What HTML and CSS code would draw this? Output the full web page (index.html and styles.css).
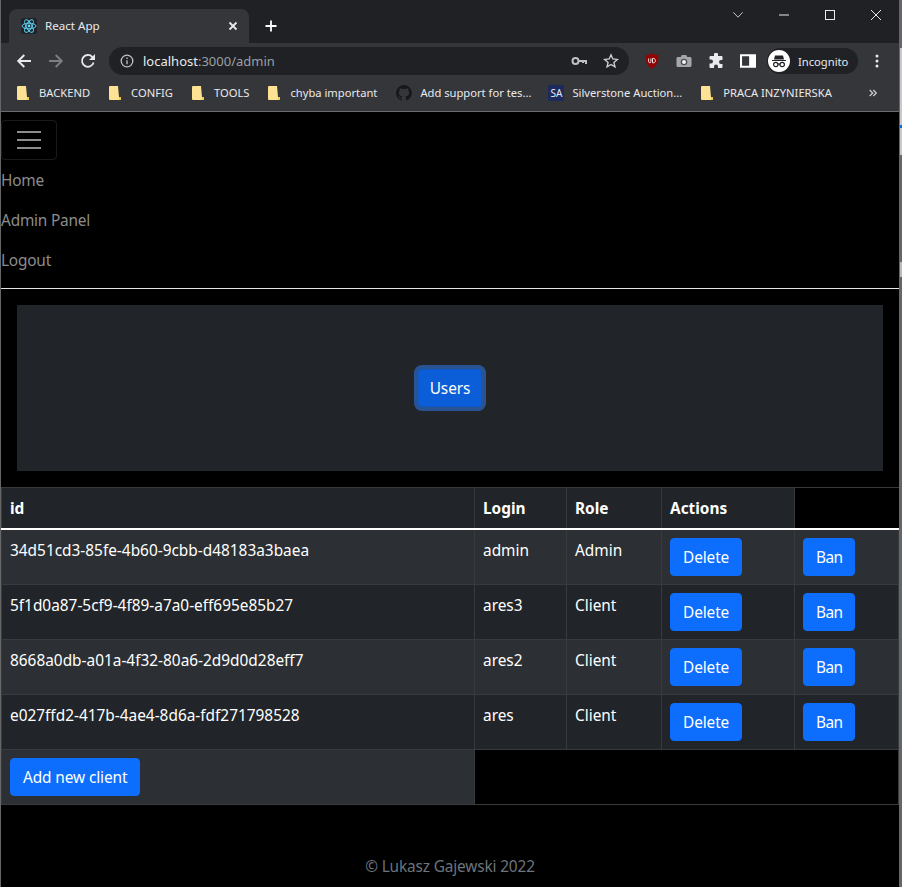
FILE: index.html
```html
<!DOCTYPE html>
<html lang="en">
<head>
    <meta charset="UTF-8">
    <title>React App</title>
    <link rel="stylesheet" href="styles.css">
</head>
<body>
<div class="window">
    <!-- browser chrome -->
    <div class="tabstrip">
        <div class="tab">
            <svg class="favicon" viewBox="0 0 16 16">
                <rect width="16" height="16" rx="2" fill="#20232a"/>
                <g fill="none" stroke="#61dafb" stroke-width=".9">
                    <ellipse cx="8" cy="8" rx="7" ry="2.8"/>
                    <ellipse cx="8" cy="8" rx="7" ry="2.8" transform="rotate(60 8 8)"/>
                    <ellipse cx="8" cy="8" rx="7" ry="2.8" transform="rotate(120 8 8)"/>
                </g>
                <circle cx="8" cy="8" r="1.4" fill="#61dafb"/>
            </svg>
            <span class="tab-title">React App</span>
            <svg class="tab-close" viewBox="0 0 10 10"><path d="M1.5 1.5l7 7M8.5 1.5l-7 7" stroke="#e8eaed" stroke-width="1.8"/></svg>
        </div>
        <svg class="new-tab" viewBox="0 0 12 12"><path d="M6 .5v11M.5 6h11" stroke="#fff" stroke-width="1.8"/></svg>
        <div class="win-controls">
            <svg class="win-chevron" viewBox="0 0 10 6"><path d="M.3.3L5 5.2 9.7.3" fill="none" stroke="#c4c7c5" stroke-width="1"/></svg>
            <svg class="win-btn" viewBox="0 0 10 10"><path d="M0 5h10" stroke="#e8eaed" stroke-width="1"/></svg>
            <svg class="win-btn" viewBox="0 0 10 10"><rect x=".5" y=".5" width="9" height="9" fill="none" stroke="#e8eaed" stroke-width="1"/></svg>
            <svg class="win-btn" viewBox="0 0 10 10"><path d="M0 0l10 10M10 0L0 10" stroke="#e8eaed" stroke-width="1"/></svg>
        </div>
    </div>

    <div class="toolbar">
        <div class="nav-icons">
            <svg class="tool-icon" viewBox="0 0 16 16"><path d="M15 8H2.5M8.3 2L2.2 8l6.1 6" fill="none" stroke="#e8eaed" stroke-width="1.9"/></svg>
            <svg class="tool-icon" viewBox="0 0 16 16"><path d="M1 8h12.500M7.700 2l6.100 6-6.100 6" fill="none" stroke="#7c7e81" stroke-width="1.9"/></svg>
            <svg class="tool-icon" viewBox="0 0 16 16"><path d="M13.600 9.500A5.900 5.900 0 1 1 12.200 3.800L14.500 6" fill="none" stroke="#e8eaed" stroke-width="1.800"/><path d="M15 1v6H9z" fill="#e8eaed"/></svg>
        </div>
        <div class="omnibox">
            <svg class="info-icon" viewBox="0 0 14 14"><circle cx="7" cy="7" r="5.800" fill="none" stroke="#bdc1c6" stroke-width="1.300"/><path d="M7 6.200v4M7 3.600v1.500" stroke="#bdc1c6" stroke-width="1.300"/></svg>
            <span class="url"><span class="url-host">localhost</span>:3000/admin</span>
            <svg class="omni-icon" viewBox="0 0 16 16"><circle cx="4.500" cy="8" r="3" fill="none" stroke="#bdc1c6" stroke-width="2"/><path d="M7.500 8H15v3M12 8v2" fill="none" stroke="#bdc1c6" stroke-width="2"/></svg>
            <svg class="omni-icon" viewBox="0 0 16 16"><path d="M8 1.800l1.800 4.200 4.600.4-3.500 3 1.100 4.500L8 11.500l-4 2.400 1.100-4.500-3.500-3 4.600-.4z" fill="none" stroke="#d0d3d6" stroke-width="1.300"/></svg>
        </div>
        <div class="ext-icons">
            <svg class="tool-icon" viewBox="0 0 16 16"><path d="M8 .5l6.500 2c0 6-1 10.500-6.500 13C2.500 13 1.500 8.500 1.500 2.500z" fill="#8f0505"/><path d="M4.600 5.500v3.200c0 1.300 2.300 1.300 2.300 0V5.500M8.500 5.500v4.300h1.200c2.300 0 2.300-4.300 0-4.300z" fill="none" stroke="#f0e0e0" stroke-width="1"/></svg>
            <svg class="tool-icon" viewBox="0 0 16 16"><path d="M.5 5.500c0-.8.600-1.500 1.500-1.500h2.800l1-2h4.400l1 2H14c.9 0 1.500.700 1.500 1.500v7c0 .8-.6 1.500-1.500 1.500H2c-.9 0-1.500-.7-1.500-1.500z" fill="#a3a7ab"/><circle cx="8" cy="9" r="3.300" fill="#4a4c50"/><circle cx="8" cy="9" r="2" fill="#f1f3f4"/></svg>
            <svg class="tool-icon" viewBox="0 0 16 16"><path d="M6 1.500a2 2 0 0 1 4 0V3h3.500a1 1 0 0 1 1 1v3H13a2 2 0 0 0 0 4h1.500v3a1 1 0 0 1-1 1H10v-1.500a2 2 0 0 0-4 0V15H2.500a1 1 0 0 1-1-1v-3.500H3a2 2 0 0 0 0-4H1.500V4a1 1 0 0 1 1-1H6z" fill="#e8eaed"/></svg>
            <svg class="tool-icon" viewBox="0 0 14 14"><path d="M0 1h14v12H0zM1.800 2.800v8.400h6.400V2.800z" fill="#fff" fill-rule="evenodd"/><rect x="8.200" y="2" width="4.500" height="10" fill="#fff"/></svg>
        </div>
        <div class="profile">
            <svg class="avatar" viewBox="0 0 22 22">
                <circle cx="11" cy="11" r="11" fill="#fff"/>
                <path d="M4 10h14v1H4zM7 5.500h8l1 4H6z" fill="#202124"/>
                <g fill="none" stroke="#202124" stroke-width="1.200"><circle cx="7.800" cy="14.500" r="2.200"/><circle cx="14.200" cy="14.500" r="2.200"/><path d="M10 14.200h2"/></g>
            </svg>
            <span class="profile-name">Incognito</span>
        </div>
        <svg class="menu-dots" viewBox="0 0 4 14"><circle cx="2" cy="2" r="1.500" fill="#e8eaed"/><circle cx="2" cy="7" r="1.500" fill="#e8eaed"/><circle cx="2" cy="12" r="1.500" fill="#e8eaed"/></svg>
    </div>

    <div class="bookmarks">
        <div class="bookmark"><svg class="folder" viewBox="0 0 12 14"><path d="M0 1a1 1 0 0 1 1-1h8l1 11h2v2a1 1 0 0 1-1 1H1a1 1 0 0 1-1-1z" fill="#fde293"/><path d="M10 11h2v3h-2z" fill="#f2c94c"/></svg><span>BACKEND</span></div>
        <div class="bookmark"><svg class="folder" viewBox="0 0 12 14"><path d="M0 1a1 1 0 0 1 1-1h8l1 11h2v2a1 1 0 0 1-1 1H1a1 1 0 0 1-1-1z" fill="#fde293"/><path d="M10 11h2v3h-2z" fill="#f2c94c"/></svg><span>CONFIG</span></div>
        <div class="bookmark"><svg class="folder" viewBox="0 0 12 14"><path d="M0 1a1 1 0 0 1 1-1h8l1 11h2v2a1 1 0 0 1-1 1H1a1 1 0 0 1-1-1z" fill="#fde293"/><path d="M10 11h2v3h-2z" fill="#f2c94c"/></svg><span>TOOLS</span></div>
        <div class="bookmark"><svg class="folder" viewBox="0 0 12 14"><path d="M0 1a1 1 0 0 1 1-1h8l1 11h2v2a1 1 0 0 1-1 1H1a1 1 0 0 1-1-1z" fill="#fde293"/><path d="M10 11h2v3h-2z" fill="#f2c94c"/></svg><span>chyba important</span></div>
        <div class="bookmark"><svg class="site-icon" viewBox="0 0 16 16"><path d="M8 0a8 8 0 0 0-2.500 15.600c.4.100.5-.2.500-.4v-1.400c-2.200.5-2.700-1-2.700-1-.4-.9-.9-1.200-.9-1.200-.7-.5.100-.5.100-.5.800.100 1.200.8 1.200.8.700 1.200 1.900.9 2.300.7.100-.5.300-.9.500-1.100-1.800-.2-3.600-.9-3.600-4 0-.9.300-1.600.8-2.100-.1-.2-.4-1 .1-2.100 0 0 .7-.2 2.200.8a7.600 7.600 0 0 1 4 0c1.500-1 2.200-.8 2.200-.8.400 1.100.2 1.900.1 2.100.5.600.8 1.300.8 2.100 0 3.100-1.900 3.700-3.700 3.900.3.300.6.700.6 1.500v2.200c0 .2.100.5.600.4A8 8 0 0 0 8 0z" fill="#16181b"/></svg><span>Add support for tes...</span></div>
        <div class="bookmark"><span class="sa-icon">SA</span><span>Silverstone Auction...</span></div>
        <div class="bookmark"><svg class="folder" viewBox="0 0 12 14"><path d="M0 1a1 1 0 0 1 1-1h8l1 11h2v2a1 1 0 0 1-1 1H1a1 1 0 0 1-1-1z" fill="#fde293"/><path d="M10 11h2v3h-2z" fill="#f2c94c"/></svg><span>PRACA INZYNIERSKA</span></div>
        <svg class="more-marks" viewBox="0 0 8 8"><path d="M.7 1l3 3-3 3M4.300 1l3 3-3 3" fill="none" stroke="#c8cacd" stroke-width="1.300"/></svg>
    </div>

    <!-- page -->
    <div class="page">
        <nav class="navbar">
            <button class="navbar-toggler" type="button"><span class="toggler-icon"></span></button>
            <a class="nav-link" href="#">Home</a>
            <a class="nav-link" href="#">Admin Panel</a>
            <a class="nav-link" href="#">Logout</a>
        </nav>
        <hr class="nav-rule">

        <div class="panel-wrap">
            <div class="panel">
                <button class="btn btn-focus" type="button">Users</button>
            </div>
        </div>

        <table class="users-table">
            <thead>
                <tr>
                    <th class="col-id">id</th>
                    <th class="col-login">Login</th>
                    <th class="col-role">Role</th>
                    <th class="col-actions">Actions</th>
                    <th class="col-empty"></th>
                </tr>
            </thead>
            <tbody>
                <tr class="odd">
                    <td>34d51cd3-85fe-4b60-9cbb-d48183a3baea</td><td>admin</td><td>Admin</td>
                    <td><button class="btn" type="button">Delete</button></td>
                    <td><button class="btn btn-ban" type="button">Ban</button></td>
                </tr>
                <tr>
                    <td>5f1d0a87-5cf9-4f89-a7a0-eff695e85b27</td><td>ares3</td><td>Client</td>
                    <td><button class="btn" type="button">Delete</button></td>
                    <td><button class="btn btn-ban" type="button">Ban</button></td>
                </tr>
                <tr class="odd">
                    <td>8668a0db-a01a-4f32-80a6-2d9d0d28eff7</td><td>ares2</td><td>Client</td>
                    <td><button class="btn" type="button">Delete</button></td>
                    <td><button class="btn btn-ban" type="button">Ban</button></td>
                </tr>
                <tr>
                    <td>e027ffd2-417b-4ae4-8d6a-fdf271798528</td><td>ares</td><td>Client</td>
                    <td><button class="btn" type="button">Delete</button></td>
                    <td><button class="btn btn-ban" type="button">Ban</button></td>
                </tr>
                <tr class="add-row">
                    <td class="odd-cell"><button class="btn" type="button">Add new client</button></td>
                    <td class="blank" colspan="4"></td>
                </tr>
            </tbody>
        </table>

        <footer class="footer">© Lukasz Gajewski 2022</footer>
    </div>
</div>
<div class="desktop-edge"></div>
</body>
</html>
```

FILE: styles.css
```css
* {
    box-sizing: border-box;
}
html, body {
    margin: 0;
    height: 100%;
}
body {
    background: #666;
    font-family: "Noto Sans", sans-serif;
    overflow: hidden;
    display: flex;
}
.window {
    width: 898px;
    height: 887px;
    margin: 0 1px;
    flex: none;
    display: flex;
    flex-direction: column;
}
.desktop-edge {
    width: 2px;
    flex: none;
    background: linear-gradient(#666 48px, #c9c9c9 48px, #c9c9c9 125px, #0a6cd0 125px, #0a6cd0 128px, #c9c9c9 128px, #c9c9c9 155px, #666 155px, #666 262px, #bbb 262px, #bbb 277px, #666 277px);
}

/* browser chrome */
.tabstrip {
    height: 43px;
    flex: none;
    background: #202124;
    display: flex;
    align-items: flex-end;
    padding-left: 8px;
}
.tab {
    width: 240px;
    height: 34px;
    background: #35363a;
    border-radius: 8px 8px 0 0;
    display: flex;
    align-items: center;
    padding: 0 11px 0 12px;
    color: #e8eaed;
    font-size: 11.6px;
}
.favicon {
    width: 16px;
    height: 16px;
    margin-right: 8px;
}
.tab-title {
    flex: 1;
    padding-bottom: 2px;
}
.tab-close {
    width: 10px;
    height: 10px;
}
.new-tab {
    width: 12px;
    height: 12px;
    margin: 0 0 11px 16px;
}
.win-controls {
    margin-left: auto;
    align-self: flex-start;
    display: flex;
    align-items: center;
    height: 10px;
    margin-top: 10px;
    padding-right: 18px;
}
.win-chevron {
    width: 10px;
    height: 6px;
}
.win-btn {
    width: 10px;
    height: 10px;
    margin-left: 36px;
}
.toolbar {
    height: 37px;
    flex: none;
    background: #35363a;
    display: flex;
    align-items: center;
    padding: 0 0 1px 15px;
}
.nav-icons, .ext-icons {
    display: flex;
    gap: 16px;
}
.tool-icon {
    width: 16px;
    height: 16px;
    display: block;
}
.omnibox {
    width: 520px;
    height: 28px;
    margin-left: 13px;
    background: #202124;
    border-radius: 14px;
    display: flex;
    align-items: center;
    padding: 0 10px 0 11px;
    font-size: 13px;
    color: #9aa0a6;
}
.info-icon {
    width: 14px;
    height: 14px;
    margin-right: 9px;
}
.url {
    flex: 1;
}
.url-host {
    color: #e8eaed;
}
.omni-icon {
    width: 16px;
    height: 16px;
    margin-left: 16px;
}
.ext-icons {
    margin-left: 15px;
}
.profile {
    width: 91px;
    height: 26px;
    margin-left: 11px;
    background: #202124;
    border-radius: 13px;
    display: flex;
    align-items: center;
    padding-left: 1px;
    color: #e8eaed;
    font-size: 11.2px;
}
.avatar {
    width: 22px;
    height: 22px;
    margin-right: 8px;
}
.menu-dots {
    width: 4px;
    height: 14px;
    margin-left: 17px;
}
.bookmarks {
    height: 32px;
    flex: none;
    background: #35363a;
    border-bottom: 1px solid #6b6c6e;
    display: flex;
    align-items: center;
    padding: 0 0 6px 16px;
    font-size: 11.2px;
    color: #e8eaed;
}
.bookmark {
    display: flex;
    align-items: center;
    margin-right: 19px;
    white-space: nowrap;
}
.bookmark:nth-child(5) {
    margin-right: 17px;
}
.folder {
    width: 12px;
    height: 14px;
    margin-right: 10px;
}
.site-icon, .sa-icon {
    width: 16px;
    height: 16px;
    margin-right: 8px;
}
.sa-icon {
    background: #1c2a5e;
    color: #e8eaed;
    font-size: 10px;
    line-height: 16px;
    text-align: center;
}
.more-marks {
    width: 8px;
    height: 8px;
    margin-left: 18px;
}

/* page */
.page {
    flex: 1;
    background: #000;
    display: flex;
    flex-direction: column;
    font-size: 15.4px;
    color: #fff;
}
.navbar {
    padding: 8px 0 8px;
    display: flex;
    flex-direction: column;
    align-items: flex-start;
}
.navbar-toggler {
    width: 56px;
    height: 40px;
    padding: 0;
    background: transparent;
    border: 1px solid rgba(255, 255, 255, .1);
    border-radius: 4px;
    display: flex;
    align-items: center;
    justify-content: center;
}
.toggler-icon {
    width: 24px;
    height: 18px;
    border-top: 2px solid #8c8c8c;
    border-bottom: 2px solid #8c8c8c;
    position: relative;
}
.toggler-icon::after {
    content: "";
    position: absolute;
    left: 0;
    right: 0;
    top: 6px;
    height: 2px;
    background: #8c8c8c;
}
.nav-link {
    display: block;
    height: 40px;
    line-height: 26px;
    padding: 8px 0;
    color: #8c8c8c;
    text-decoration: none;
    letter-spacing: -.2px;
}
.nav-rule {
    margin: 0;
    border: 0;
    height: 1px;
    background: #e6e6e6;
}
.panel-wrap {
    padding: 16px;
}
.panel {
    height: 166px;
    background: #212529;
    display: flex;
    align-items: center;
    justify-content: center;
}
.btn {
    font: inherit;
    color: #fff;
    background: #0d6efd;
    border: 1px solid #0d6efd;
    border-radius: 4px;
    padding: 7px 12px 5px;
    height: 38px;
    line-height: 24px;
    white-space: nowrap;
    display: block;
    letter-spacing: -.1px;
}
.btn-ban {
    letter-spacing: -.6px;
}
.btn-focus {
    width: 64px;
    padding: 7px 0 5px;
    background: #0b5ed7;
    border-color: #0a58ca;
    box-shadow: 0 0 0 4px rgba(49, 132, 253, .5);
}
.users-table {
    width: 898px;
    table-layout: fixed;
    border-collapse: collapse;
}
.col-id { width: 473px; }
.col-login { width: 92px; }
.col-role { width: 95px; }
.col-actions { width: 133px; }
.users-table th, .users-table td {
    padding: 8px;
    text-align: left;
    vertical-align: top;
    line-height: 26px;
    border: 1px solid #373b3e;
    background: #212529;
    color: #fff;
}
.users-table th {
    height: 41px;
    padding-bottom: 6px;
    font-weight: 700;
    border-bottom: 2px solid #fff;
}
.users-table td {
    height: 55px;
}
.users-table tr.odd td, .users-table td.odd-cell {
    background: #2c3034;
}
.users-table th.col-empty, .users-table td.blank {
    background: #000;
}
.users-table th.col-empty {
    border-right: 0;
}
.users-table td.blank {
    border-left: 1px solid #373b3e;
}
.footer {
    margin-top: 50px;
    text-align: center;
    line-height: 24px;
    color: #6c757d;
    letter-spacing: -.15px;
}
```
